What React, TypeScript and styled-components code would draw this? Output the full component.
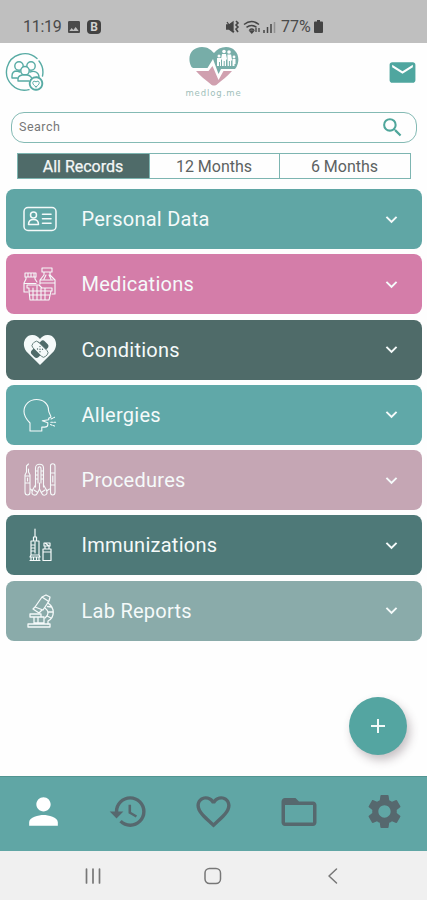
import React from 'react';
import styled, { createGlobalStyle } from 'styled-components';
import {
  MdEmail, MdSearch, MdPerson, MdHistory, MdFavoriteBorder,
  MdFolderOpen, MdSettings, MdKeyboardArrowDown, MdAdd, MdImage,
} from 'react-icons/md';

const Global = createGlobalStyle`
  * { box-sizing: border-box; }
  body { margin: 0; background: #fefefe; font-family: Roboto, sans-serif; }
  button, input { font: inherit; border: 0; padding: 0; margin: 0; background: none; }
`;

const Screen = styled.div`
  width: 427px;
  height: 900px;
  display: flex;
  flex-direction: column;
  overflow: hidden;
  background: #fefefe;
`;

const StatusBar = styled.div`
  height: 43px;
  flex: none;
  display: flex;
  align-items: center;
  padding: 10px 104px 0 23px;
  background: #bfbfbf;
  color: #4a4a4a;
  font-size: 16px;
`;

const Clock = styled.span`
  width: 43px;
  letter-spacing: -0.3px;
`;

const Badge = styled.span`
  width: 14px;
  height: 14px;
  margin-left: 5px;
  border-radius: 4px;
  background: #424242;
  color: #d2d2d2;
  font-size: 12px;
  font-weight: 700;
  line-height: 14px;
  text-align: center;
`;

const Signals = styled.div`
  margin-left: auto;
  display: flex;
  align-items: center;
`;

const Percent = styled.span`
  margin-left: 4px;
  width: 33px;
`;

const Header = styled.header`
  height: 69px;
  flex: none;
  display: grid;
  grid-template-columns: 1fr 70px 1fr;
  padding: 0 9px 0 5px;
`;

const GroupButton = styled.button`
  width: 40px;
  height: 40px;
  margin-top: 9px;
  color: #58aba4;
`;

const Brand = styled.div`
  display: flex;
  flex-direction: column;
  align-items: center;
  padding-top: 3px;
  margin-left: 4px;
`;

const BrandName = styled.span`
  margin-top: 2px;
  color: #a0bfba;
  font: 8.5px/10px "DejaVu Sans", sans-serif;
  letter-spacing: 0.9px;
  white-space: nowrap;
`;

const MailButton = styled.button`
  justify-self: end;
  align-self: start;
  margin-top: 14px;
  height: 31px;
  color: #4fa69f;
`;

const SearchBox = styled.label`
  height: 31px;
  flex: none;
  margin: 0 10px 0 11px;
  padding: 0 11px 0 7px;
  display: flex;
  align-items: center;
  border: 1px solid #84bab4;
  border-radius: 13px;
  color: #4fa69b;
`;

const SearchInput = styled.input`
  flex: 1;
  min-width: 0;
  height: 28px;
  padding-bottom: 3px;
  outline: 0;
  font-size: 12.5px;
  letter-spacing: 0.5px;
  &::placeholder { color: #777; opacity: 1; }
`;

const Periods = styled.div`
  height: 26px;
  flex: none;
  margin: 10px 16px 0 17px;
  display: grid;
  grid-template-columns: 131px 130px 1fr;
  border: 1px solid #7db5b1;
`;

const Period = styled.button<{ $active?: boolean }>`
  padding-right: 1px;
  border-left: ${p => (p.$active ? '0' : '1px solid #7db5b1')};
  background: ${p => (p.$active ? '#4f6b69' : '#fefefe')};
  color: ${p => (p.$active ? '#f4f7f6' : '#5c6262')};
  font-size: 16px;
  -webkit-text-stroke: ${p => (p.$active ? '0.25px' : '0')};
`;

const Records = styled.main`
  flex: none;
  display: flex;
  flex-direction: column;
  gap: 5.25px;
  padding: 10px 5px 0 6px;
`;

const RecordCard = styled.button<{ $color: string }>`
  height: 60px;
  display: flex;
  align-items: center;
  padding: 0 19px 0 17px;
  border-radius: 8px;
  background: ${p => p.$color};
  color: #f5fafa;
`;

const CardTitle = styled.span`
  flex: 1;
  padding-left: 24.5px;
  text-align: left;
  font-size: 20px;
  letter-spacing: 0.26px;
`;

const Actions = styled.div`
  flex: 1;
  display: flex;
  align-items: flex-end;
  justify-content: flex-end;
  padding: 0 20px 21px 0;
`;

const AddButton = styled.button`
  width: 58px;
  height: 58px;
  display: grid;
  place-items: center;
  border-radius: 50%;
  background: #54a5a1;
  color: #f2faf9;
  box-shadow: 3px 5px 10px rgba(70, 50, 60, 0.3);
`;

const Tabs = styled.nav`
  height: 75px;
  flex: none;
  display: grid;
  grid-template-columns: repeat(5, 1fr);
  padding: 0 0 5px 1px;
  background: #60a6a5;
  border-top: 1px solid #529491;
`;

const Tab = styled.button<{ $active?: boolean }>`
  display: grid;
  place-items: center;
  color: ${p => (p.$active ? '#ffffff' : '#56686e')};
`;

const SystemBar = styled.footer`
  height: 49px;
  flex: none;
  display: grid;
  grid-template-columns: 1fr 1fr 1fr;
  align-items: center;
  justify-items: center;
  padding: 1px 34px 0 33px;
  background: #f0f0f0;
  color: #777;
`;

const LineIcon = styled.svg`
  display: block;
  flex: none;
  fill: none;
  stroke: currentColor;
  stroke-linecap: round;
  stroke-linejoin: round;
`;

const RowIcon = ({ children }: { children: React.ReactNode }) => (
  <LineIcon width="34" height="34" viewBox="0 0 34 34" strokeWidth="1.1">{children}</LineIcon>
);

const IdCardIcon = () => (
  <RowIcon>
    <rect x="1" y="5.5" width="32" height="23" rx="4" strokeWidth="1.5" />
    <circle cx="10.5" cy="13" r="3" strokeWidth="1.5" />
    <path d="M5.5 22.5c0-3 2-5 5-5s5 2 5 5z" strokeWidth="1.5" />
    <path d="M19.5 12.3H28M19.5 16.8H28M19.5 21.3H28" strokeWidth="1.6" />
  </RowIcon>
);

const MedicineIcon = () => (
  <RowIcon>
    <path d="M2 6h11v4H2zM5 6v4M8 6v4M11 6v4M3 10v2L1 16v9h4M12 10v2l2 3M1.5 16.5H13M19 1h10v4H19zM21 5v3l-4 5v4M27 5v3l5 5v14h-3M18 13h12M18 16h14M23 8l-2 4M26 8l2 4" />
    <path d="M4 18h12l3 3h10v3H6v-3H4zM6 24l1 9h19l2-9M10 21v12M14 19v14M18 21v12M22 21v12M7 28h20" />
  </RowIcon>
);

const HeartPlasterIcon = () => (
  <RowIcon>
    <path d="M17 32 3.4 18.4C-1.8 12 1.5 2.3 9 2c3.8-.2 6.2 1.7 8 4 1.8-2.3 4.2-4.2 8-4 7.5.3 10.8 10 5.6 16.4z" fill="currentColor" stroke="none" />
    <rect x="7.4" y="11.5" width="18.5" height="9.5" rx="3" fill="#4f6b69" stroke="none" transform="rotate(-45 16.6 16.2)" />
    <rect x="8" y="12.2" width="18" height="8" rx="3" fill="#f5fafa" stroke="#4f6b69" strokeWidth=".8" transform="rotate(45 17 16.2)" />
    <g fill="#4f6b69" stroke="none">
      <circle cx="17" cy="13.6" r=".7" /><circle cx="14.5" cy="16" r=".7" />
      <circle cx="17" cy="16.2" r=".7" /><circle cx="19.5" cy="16.2" r=".7" />
      <circle cx="17" cy="18.8" r=".7" />
    </g>
  </RowIcon>
);

const CoughIcon = () => (
  <RowIcon>
    <path d="M7 33v-8C3.4 21.4 1 18 1 13.5 1 6.5 6.5 1.5 13.5 1.5S25.5 6 25.5 12c.1 3 2.2 4.8 2.5 7l-2.3 1.2v1.5l-6.4 1.1 5.5 2v2c0 1.9-1.3 2.3-3.3 2.3h-2.7V33z" />
    <path d="m28 21 3.5-1.7M27.8 24.3H33M27.5 26.5l4 1.6" strokeDasharray="1.8 1.2" />
  </RowIcon>
);

const InstrumentsIcon = () => (
  <RowIcon>
    <path d="M5.5 1 3.5 3v6L2 12v17c0 4 5 4 5 0V12L5.5 9V6M2 13h5M2 20h5M4.5 15v3" />
    <path d="M12.5 24V5c0-5 8-5 8 0v19M15 20V6c0-3 3-3 3 0v14M12.5 8H15M12.5 12H15M12.5 16H15M18 8h2.5M18 12h2.5M18 16h2.5" />
    <path d="M27.5 3c0-3 4.5-3 4.5 0v26c0 4-4.5 4-4.5 0zM27.5 10H32M27.5 22H32M29.8 13v6" />
    <path d="m12.5 22-3 5c-2 5 3 7 5 3l2-4 2 4c2 4 7 2 5-3l-3-5M11 27l3 2M22 27l-3 2M16.5 20v6M23.5 28l3-2M9.5 28l-2-2" />
  </RowIcon>
);

const VaccineIcon = () => (
  <RowIcon>
    <path d="M12 1v8M10.5 9h3v4h-3zM8 13h8v14H8zM8 27l-1 2h10l-1-2M12 14v11M9 17h2M9 20h2M9 23h2M8 29v3M16 29v3M10.5 29v3M13.5 29v3M7 32.5h10M21 15h6v3h-6zM22 18v3M26 18v3M20 21h8v11.5h-8zM20 24h8M22 15l4 3" strokeWidth="1.2" />
  </RowIcon>
);

const MicroscopeIcon = () => (
  <RowIcon>
    <path d="m12 13 7-10 4-2 4 2-1 4-6 9zM19 3l6 4M12 13l-2 2 6 4 3-3" strokeWidth="1.3" />
    <path d="M25 9c7 5 7 14 0 18v3M22 14c4 3 4 7 0 10M24.5 12.500l4 .5M25 18h5M24 22l4 2" strokeWidth="1.3" />
    <path d="M7 20h11v3H7zM11 23h10v6H11zM15 24v4M5 30h22v3H5z" strokeWidth="1.3" />
  </RowIcon>
);

const GroupIcon = () => (
  <LineIcon width="40" height="40" viewBox="0 0 40 40" strokeWidth="1.4">
    <path d="M24 37.6A18.2 18.2 0 1 1 32 6.5M34 9a18.2 18.2 0 0 1 3.5 15" />
    <circle cx="14" cy="14" r="4.2" />
    <circle cx="26" cy="14" r="4.2" />
    <circle cx="20" cy="18.7" r="4.2" fill="#fefefe" />
    <path d="M7 26v-2c0-3.3 2-5 5-5l3 1M25 20c5-2 9 1 9 5M7 26h5M13 29v-2c0-3 2.8-4.2 7-4.2 3.2 0 5.5 1 6.5 3M13 29h11" />
    <circle cx="31" cy="31.5" r="6.3" strokeDasharray="2.7 .6" fill="#fefefe" strokeWidth="1.9" />
    <path d="M31 34.8c-2.2-1.4-3.2-2.6-3.2-4.2 0-1.5 2-2 3.2-.6 1.2-1.4 3.2-.9 3.2.6 0 1.6-1 2.8-3.2 4.2z" strokeWidth="1" />
  </LineIcon>
);

const Logo = () => (
  <svg width="50" height="40" viewBox="0 0 50 40">
    <path d="M2.5 21C-3 10 3 1 13 1c6 0 9 3 12 6 3-4 7-6 12-6 10 0 15.5 10 10.5 20L46 23H32l-2.5 5L24 13l-5.500 9H4z" fill="#77ada8" />
    <path d="M7 25h12.500l4-5 6 14 5-9H43c-4 5-10 9-14.500 13-2 2-5 2-7 0C17 34 11 30 7 25z" fill="#d0a0af" />
    <g fill="#fefefe">
      <circle cx="30" cy="10" r="1.5" /><circle cx="35" cy="5.5" r="1.8" />
      <circle cx="40" cy="6" r="1.8" /><circle cx="45" cy="11" r="1.4" />
      <path d="M28 12h4v8h-1v-4h-1v4h-2zM33 8h4l1 5-1 1v6h-1.3v-5h-1v5H33v-6l-1-1zM38.4 8.5h3.7l1 6h-1V20h-1.2v-5h-1v5h-1.3zM43.5 13h3v5h-1v2h-2z" />
    </g>
  </svg>
);

const SignalIcons = () => (
  <svg width="51" height="16" viewBox="0 0 51 16" fill="none" stroke="#454545">
    <path d="M0 6h3l4-3v10l-4-3H0zM1 3l7 10" fill="#454545" strokeWidth="1.3" />
    <path d="m10 2 2 2-2 2 2 2-2 2 2 3" strokeWidth="1.6" />
    <path d="M18 5.5c5-4 10-4 15 0M20.5 8.3c3.4-2.6 6.5-2.6 10 0M23.5 11c1.5-1.2 3-1.2 4.5 0" strokeWidth="1.5" />
    <path d="m24 12 1.8 2 1.8-2zM30 9v4M33 13V9" fill="#454545" strokeWidth="1.3" />
    <path d="M38 11v3M41.5 8v6M45 5v9" strokeWidth="1.5" />
    <path d="M48.5 3v11" stroke="#939393" strokeWidth="1.5" />
  </svg>
);

const BatteryIcon = () => (
  <svg width="9" height="13" viewBox="0 0 9 13" fill="#444">
    <path d="M3 0h3v1.5h2q1 0 1 1V12q0 1-1 1H1q-1 0-1-1V2.5q0-1 1-1h2z" />
  </svg>
);

const records = [
  { title: 'Personal Data', color: '#60a6a5', Icon: IdCardIcon },
  { title: 'Medications', color: '#d47da9', Icon: MedicineIcon },
  { title: 'Conditions', color: '#4f6b69', Icon: HeartPlasterIcon },
  { title: 'Allergies', color: '#60a8a8', Icon: CoughIcon },
  { title: 'Procedures', color: '#c5a6b4', Icon: InstrumentsIcon },
  { title: 'Immunizations', color: '#4e7978', Icon: VaccineIcon },
  { title: 'Lab Reports', color: '#8aabaa', Icon: MicroscopeIcon },
];

const tabs = [
  { label: 'Profile', Icon: MdPerson, size: 43 },
  { label: 'History', Icon: MdHistory, size: 41 },
  { label: 'Favorites', Icon: MdFavoriteBorder, size: 41 },
  { label: 'Documents', Icon: MdFolderOpen, size: 42 },
  { label: 'Settings', Icon: MdSettings, size: 41 },
];

export default function App() {
  return (
    <>
      <Global />
      <Screen>
        <StatusBar>
          <Clock>11:19</Clock>
          <MdImage size={16} />
          <Badge>B</Badge>
          <Signals>
            <SignalIcons />
            <Percent>77%</Percent>
            <BatteryIcon />
          </Signals>
        </StatusBar>
        <Header>
          <GroupButton aria-label="Family"><GroupIcon /></GroupButton>
          <Brand>
            <Logo />
            <BrandName>medlog.me</BrandName>
          </Brand>
          <MailButton aria-label="Messages"><MdEmail size={31} /></MailButton>
        </Header>
        <SearchBox>
          <SearchInput placeholder="Search" />
          <MdSearch size={25} />
        </SearchBox>
        <Periods>
          <Period $active>All Records</Period>
          <Period>12 Months</Period>
          <Period>6 Months</Period>
        </Periods>
        <Records>
          {records.map(({ title, color, Icon }) => (
            <RecordCard key={title} $color={color}>
              <Icon />
              <CardTitle>{title}</CardTitle>
              <MdKeyboardArrowDown size={23} />
            </RecordCard>
          ))}
        </Records>
        <Actions>
          <AddButton aria-label="Add record"><MdAdd size={24} /></AddButton>
        </Actions>
        <Tabs>
          {tabs.map(({ label, Icon, size }, i) => (
            <Tab key={label} aria-label={label} $active={i === 0}><Icon size={size} /></Tab>
          ))}
        </Tabs>
        <SystemBar>
          <LineIcon width="18" height="18" viewBox="0 0 18 18" strokeWidth="1.7">
            <path d="M2.500 2v14M9 2v14M15.500 2v14" />
          </LineIcon>
          <LineIcon width="18" height="18" viewBox="0 0 18 18" strokeWidth="1.5">
            <rect x="1" y="1.5" width="15.5" height="15" rx="4.5" />
          </LineIcon>
          <LineIcon width="18" height="18" viewBox="0 0 18 18" strokeWidth="1.5">
            <path d="m12.5 2-7.5 7 7.5 7" />
          </LineIcon>
        </SystemBar>
      </Screen>
    </>
  );
}
